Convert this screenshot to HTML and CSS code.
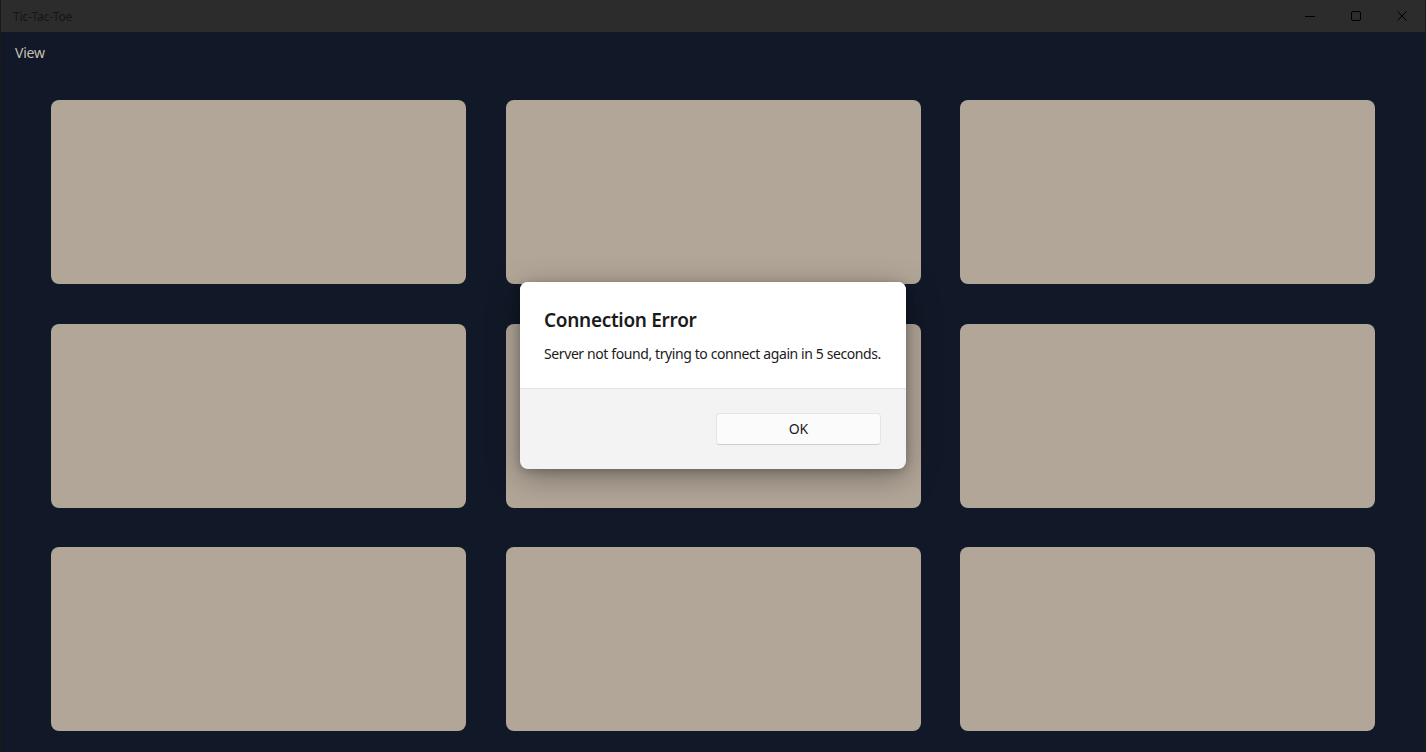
FILE: index.html
```html
<!DOCTYPE html>
<html>
<head>
<meta charset="utf-8">
<title>Tic-Tac-Toe</title>
<link rel="stylesheet" href="styles.css">
</head>
<body>
<div class="window">
  <header class="titlebar">
    <span class="title">Tic-Tac-Toe</span>
    <div class="controls">
      <button class="ctl" aria-label="Minimize">
        <svg width="10" height="10" viewBox="0 0 10 10"><path d="M0 5.5H10" stroke="#000" stroke-width="1"/></svg>
      </button>
      <button class="ctl" aria-label="Maximize">
        <svg width="10" height="10" viewBox="0 0 10 10"><rect x="0.5" y="0.5" width="9" height="9" rx="1.5" fill="none" stroke="#000" stroke-width="1"/></svg>
      </button>
      <button class="ctl" aria-label="Close">
        <svg width="10" height="10" viewBox="0 0 10 10"><path d="M0.3 0.3L9.7 9.7M9.7 0.3L0.3 9.7" stroke="#000" stroke-width="1"/></svg>
      </button>
    </div>
  </header>
  <nav class="menubar"><span class="menu-item">View</span></nav>
  <main class="board">
    <div class="cell"></div>
    <div class="cell"></div>
    <div class="cell"></div>
    <div class="cell"></div>
    <div class="cell"></div>
    <div class="cell"></div>
    <div class="cell"></div>
    <div class="cell"></div>
    <div class="cell"></div>
  </main>
  <div class="overlay">
    <div class="dialog">
      <div class="dialog-body">
        <h2 class="dialog-title">Connection Error</h2>
        <p class="dialog-text">Server not found, trying to connect again in 5 seconds.</p>
      </div>
      <div class="dialog-footer">
        <button class="btn">OK</button>
      </div>
    </div>
  </div>
</div>
</body>
</html>
```
FILE: styles.css
```css
* { box-sizing: border-box; }
html, body { margin: 0; padding: 0; }
body {
  font-family: "Noto Sans", "Open Sans", sans-serif;
  background: #111827;
}
.window {
  position: relative;
  width: 1426px;
  height: 752px;
  display: flex;
  flex-direction: column;
  background: #111827;
  border-left: 1px solid #1a1a1a;
  border-right: 1px solid #1a1a1a;
  overflow: hidden;
}
.titlebar {
  height: 32px;
  flex: none;
  background: #2c2c2c;
  display: flex;
  align-items: center;
  justify-content: space-between;
}
.title {
  padding-left: 12px;
  font-size: 12px;
  letter-spacing: -0.1px;
  color: #151515;
}
.controls { display: flex; height: 100%; }
.ctl {
  width: 46px;
  height: 32px;
  border: 0;
  background: transparent;
  padding: 0;
  display: flex;
  align-items: center;
  justify-content: center;
}
.menubar {
  height: 40px;
  flex: none;
  display: flex;
  align-items: center;
  padding-left: 14px;
}
.menu-item {
  font-size: 14px;
  letter-spacing: -0.2px;
  color: #c9c0b3;
}
.board {
  flex: 1;
  display: grid;
  grid-template-columns: repeat(3, 1fr);
  grid-template-rows: repeat(3, 1fr);
  gap: 39.5px;
  padding: 28px 50px 21px 50px;
}
.cell {
  background: #b2a698;
  border-radius: 8px;
}
.overlay {
  position: absolute;
  inset: 0;
  padding-bottom: 2px;
  display: flex;
  align-items: center;
  justify-content: center;
}
.dialog {
  width: 386px;
  background: #f3f3f3;
  border-radius: 8px;
  overflow: hidden;
  box-shadow: 0 8px 32px rgba(0,0,0,0.35), 0 2px 8px rgba(0,0,0,0.2);
}
.dialog-body {
  background: #ffffff;
  padding: 24px 24px 24px 24px;
  border-bottom: 1px solid #e5e5e5;
}
.dialog-title {
  margin: 0 0 10px 0;
  font-size: 19px;
  line-height: 28px;
  font-weight: 600;
  letter-spacing: -0.3px;
  color: #1b1b1b;
}
.dialog-text {
  margin: 0;
  font-size: 14px;
  line-height: 20px;
  letter-spacing: -0.4px;
  white-space: nowrap;
  color: #1b1b1b;
}
.dialog-footer {
  padding: 24px 25px 24px 24px;
  display: flex;
  justify-content: flex-end;
}
.btn {
  width: 165px;
  height: 32px;
  background: #fbfbfb;
  border: 1px solid #e5e5e5;
  border-bottom-color: #cccccc;
  border-radius: 4px;
  font-family: inherit;
  font-size: 14px;
  color: #1b1b1b;
}
```
